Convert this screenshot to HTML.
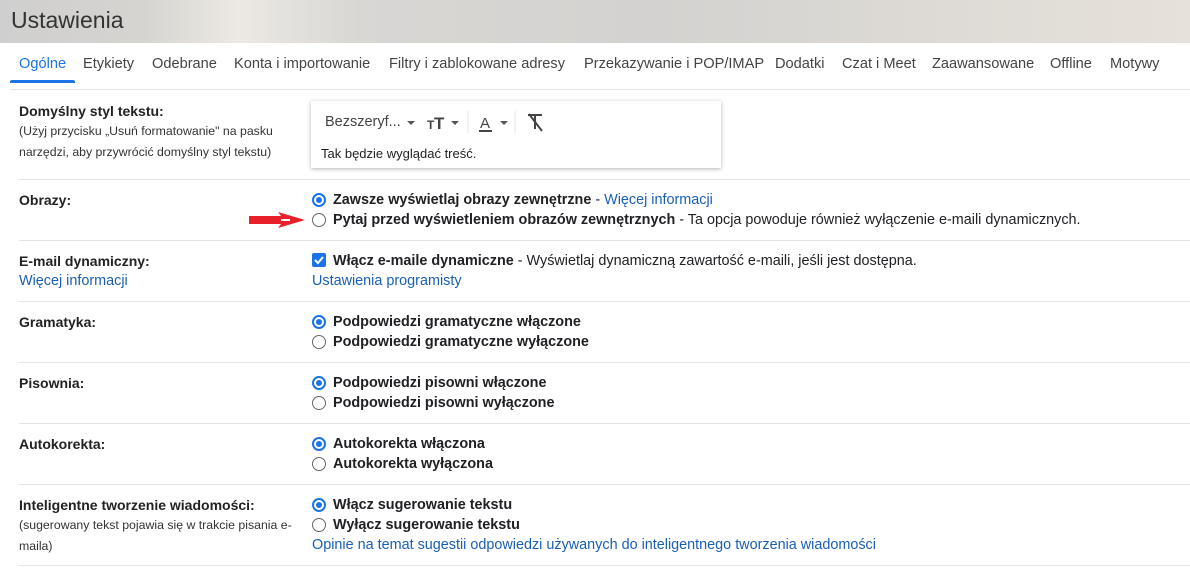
<!DOCTYPE html>
<html><head><meta charset="utf-8">
<style>
*{margin:0;padding:0;box-sizing:border-box}
body{width:1190px;height:574px;overflow:hidden;background:#fff;font-family:"Liberation Sans",sans-serif;color:#202124;position:relative}
.hdr{position:absolute;left:0;top:0;width:1190px;height:43px;background:linear-gradient(90deg,#cfcfcf 0%,#d6d4d0 12%,#ece9e4 20%,#d9d7d4 30%,#d3d2d0 55%,#dcd9d4 75%,#e6e1da 100%)}
.hdr span{position:absolute;left:11px;top:7px;font-size:23px;color:#333}
.t{position:absolute;white-space:nowrap}
.tab{top:56px;font-size:14.6px;color:#444}
.line{position:absolute;left:19px;right:0;height:1px;background:#e3e3e3}
.lab{font-size:14px;font-weight:bold;color:#222;left:19px}
.sm{font-size:12.3px;color:#333;left:19px}
.opt{font-size:14.4px;left:333px;color:#202124}
.opt b{font-weight:bold}
.lnk{color:#1a5fb4}
.r{position:absolute;left:312px;width:14px;height:14px;border-radius:50%;border:1.5px solid #666}
.r.on{border:2px solid #1a73e8}
.r.on::after{content:"";position:absolute;left:2px;top:2px;width:6px;height:6px;border-radius:50%;background:#1a73e8}
</style></head><body>
<div class="hdr"><span>Ustawienia</span></div>
<div class="t tab" style="left:19px;color:#1a73e8">Ogólne</div>
<div style="position:absolute;left:10px;top:80px;width:65px;height:3px;background:#1a73e8;border-radius:2px 2px 0 0"></div>
<div class="t tab" style="left:83px">Etykiety</div>
<div class="t tab" style="left:152px">Odebrane</div>
<div class="t tab" style="left:234px">Konta i importowanie</div>
<div class="t tab" style="left:389px">Filtry i zablokowane adresy</div>
<div class="t tab" style="left:584px">Przekazywanie i POP/IMAP</div>
<div class="t tab" style="left:775px">Dodatki</div>
<div class="t tab" style="left:842px">Czat i Meet</div>
<div class="t tab" style="left:932px">Zaawansowane</div>
<div class="t tab" style="left:1050px">Offline</div>
<div class="t tab" style="left:1110px">Motywy</div>
<div class="line" style="top:89px;left:10px"></div>

<div class="t lab" style="top:103px">Domyślny styl tekstu:</div>
<div class="t sm" style="top:124px">(Użyj przycisku „Usuń formatowanie" na pasku</div>
<div class="t sm" style="top:145px">narzędzi, aby przywrócić domyślny styl tekstu)</div>
<div style="position:absolute;left:311px;top:101px;width:410px;height:67px;background:#fff;box-shadow:0 1px 4px rgba(0,0,0,.3)"></div>
<div class="t" style="left:325px;top:114px;font-size:14.5px;color:#444">Bezszeryf...</div>
<svg style="position:absolute;left:311px;top:101px" width="410" height="40">
<path d="M96 20l4 4 4-4z" fill="#555"/>
<text x="116" y="28" font-family="Liberation Sans" font-weight="bold" font-size="12" fill="#444">T</text>
<text x="123" y="28" font-family="Liberation Sans" font-weight="bold" font-size="17" fill="#444">T</text>
<path d="M140 20l4 4 4-4z" fill="#555"/>
<line x1="157" y1="10" x2="157" y2="32" stroke="#e5e5e5"/>
<text x="169" y="27" font-family="Liberation Sans" font-size="15" fill="#444">A</text>
<rect x="168" y="29" width="13" height="2" fill="#444"/>
<path d="M189 20l4 4 4-4z" fill="#555"/>
<line x1="204" y1="10" x2="204" y2="32" stroke="#e5e5e5"/>
<path d="M217 14h14M224 14v14M218 13l13 17" stroke="#444" stroke-width="2" fill="none"/>
</svg>
<div class="t" style="left:321px;top:146px;font-size:13px;color:#222">Tak będzie wyglądać treść.</div>
<div class="line" style="top:179px"></div>

<div class="t lab" style="top:192px">Obrazy:</div>
<div class="r on" style="top:193px"></div>
<div class="t opt" style="top:192px"><b>Zawsze wyświetlaj obrazy zewnętrzne</b> - <span class="lnk">Więcej informacji</span></div>
<div class="r" style="top:213px"></div>
<div class="t opt" style="top:212px"><b>Pytaj przed wyświetleniem obrazów zewnętrznych</b> - Ta opcja powoduje również wyłączenie e-maili dynamicznych.</div>
<svg style="position:absolute;left:248px;top:211px" width="60" height="18"><path d="M1 5h32l-3-4 27 8-27 8 3-4h-32z" fill="#e8202a"/><rect x="33" y="8" width="9" height="2" fill="#fff"/></svg>
<div class="line" style="top:240px"></div>

<div class="t lab" style="top:253px">E-mail dynamiczny:</div>
<div class="t lnk" style="left:19px;top:273px;font-size:14.4px">Więcej informacji</div>
<svg style="position:absolute;left:312px;top:253px" width="14" height="14"><rect width="14" height="14" rx="2" fill="#1a73e8"/><path d="M3 7l3 3 5-6" stroke="#fff" stroke-width="2" fill="none"/></svg>
<div class="t opt" style="top:253px"><b>Włącz e-maile dynamiczne</b> - Wyświetlaj dynamiczną zawartość e-maili, jeśli jest dostępna.</div>
<div class="t lnk" style="left:312px;top:273px;font-size:14.4px">Ustawienia programisty</div>
<div class="line" style="top:301px"></div>

<div class="t lab" style="top:314px">Gramatyka:</div>
<div class="r on" style="top:315px"></div>
<div class="t opt" style="top:314px"><b>Podpowiedzi gramatyczne włączone</b></div>
<div class="r" style="top:335px"></div>
<div class="t opt" style="top:334px"><b>Podpowiedzi gramatyczne wyłączone</b></div>
<div class="line" style="top:362px"></div>

<div class="t lab" style="top:375px">Pisownia:</div>
<div class="r on" style="top:376px"></div>
<div class="t opt" style="top:375px"><b>Podpowiedzi pisowni włączone</b></div>
<div class="r" style="top:396px"></div>
<div class="t opt" style="top:395px"><b>Podpowiedzi pisowni wyłączone</b></div>
<div class="line" style="top:423px"></div>

<div class="t lab" style="top:436px">Autokorekta:</div>
<div class="r on" style="top:437px"></div>
<div class="t opt" style="top:436px"><b>Autokorekta włączona</b></div>
<div class="r" style="top:457px"></div>
<div class="t opt" style="top:456px"><b>Autokorekta wyłączona</b></div>
<div class="line" style="top:484px"></div>

<div class="t lab" style="top:497px">Inteligentne tworzenie wiadomości:</div>
<div class="t sm" style="top:518px">(sugerowany tekst pojawia się w trakcie pisania e-</div>
<div class="t sm" style="top:539px">maila)</div>
<div class="r on" style="top:498px"></div>
<div class="t opt" style="top:497px"><b>Włącz sugerowanie tekstu</b></div>
<div class="r" style="top:518px"></div>
<div class="t opt" style="top:517px"><b>Wyłącz sugerowanie tekstu</b></div>
<div class="t lnk" style="left:312px;top:537px;font-size:14.4px">Opinie na temat sugestii odpowiedzi używanych do inteligentnego tworzenia wiadomości</div>
<div class="line" style="top:565px"></div>
</body></html>
